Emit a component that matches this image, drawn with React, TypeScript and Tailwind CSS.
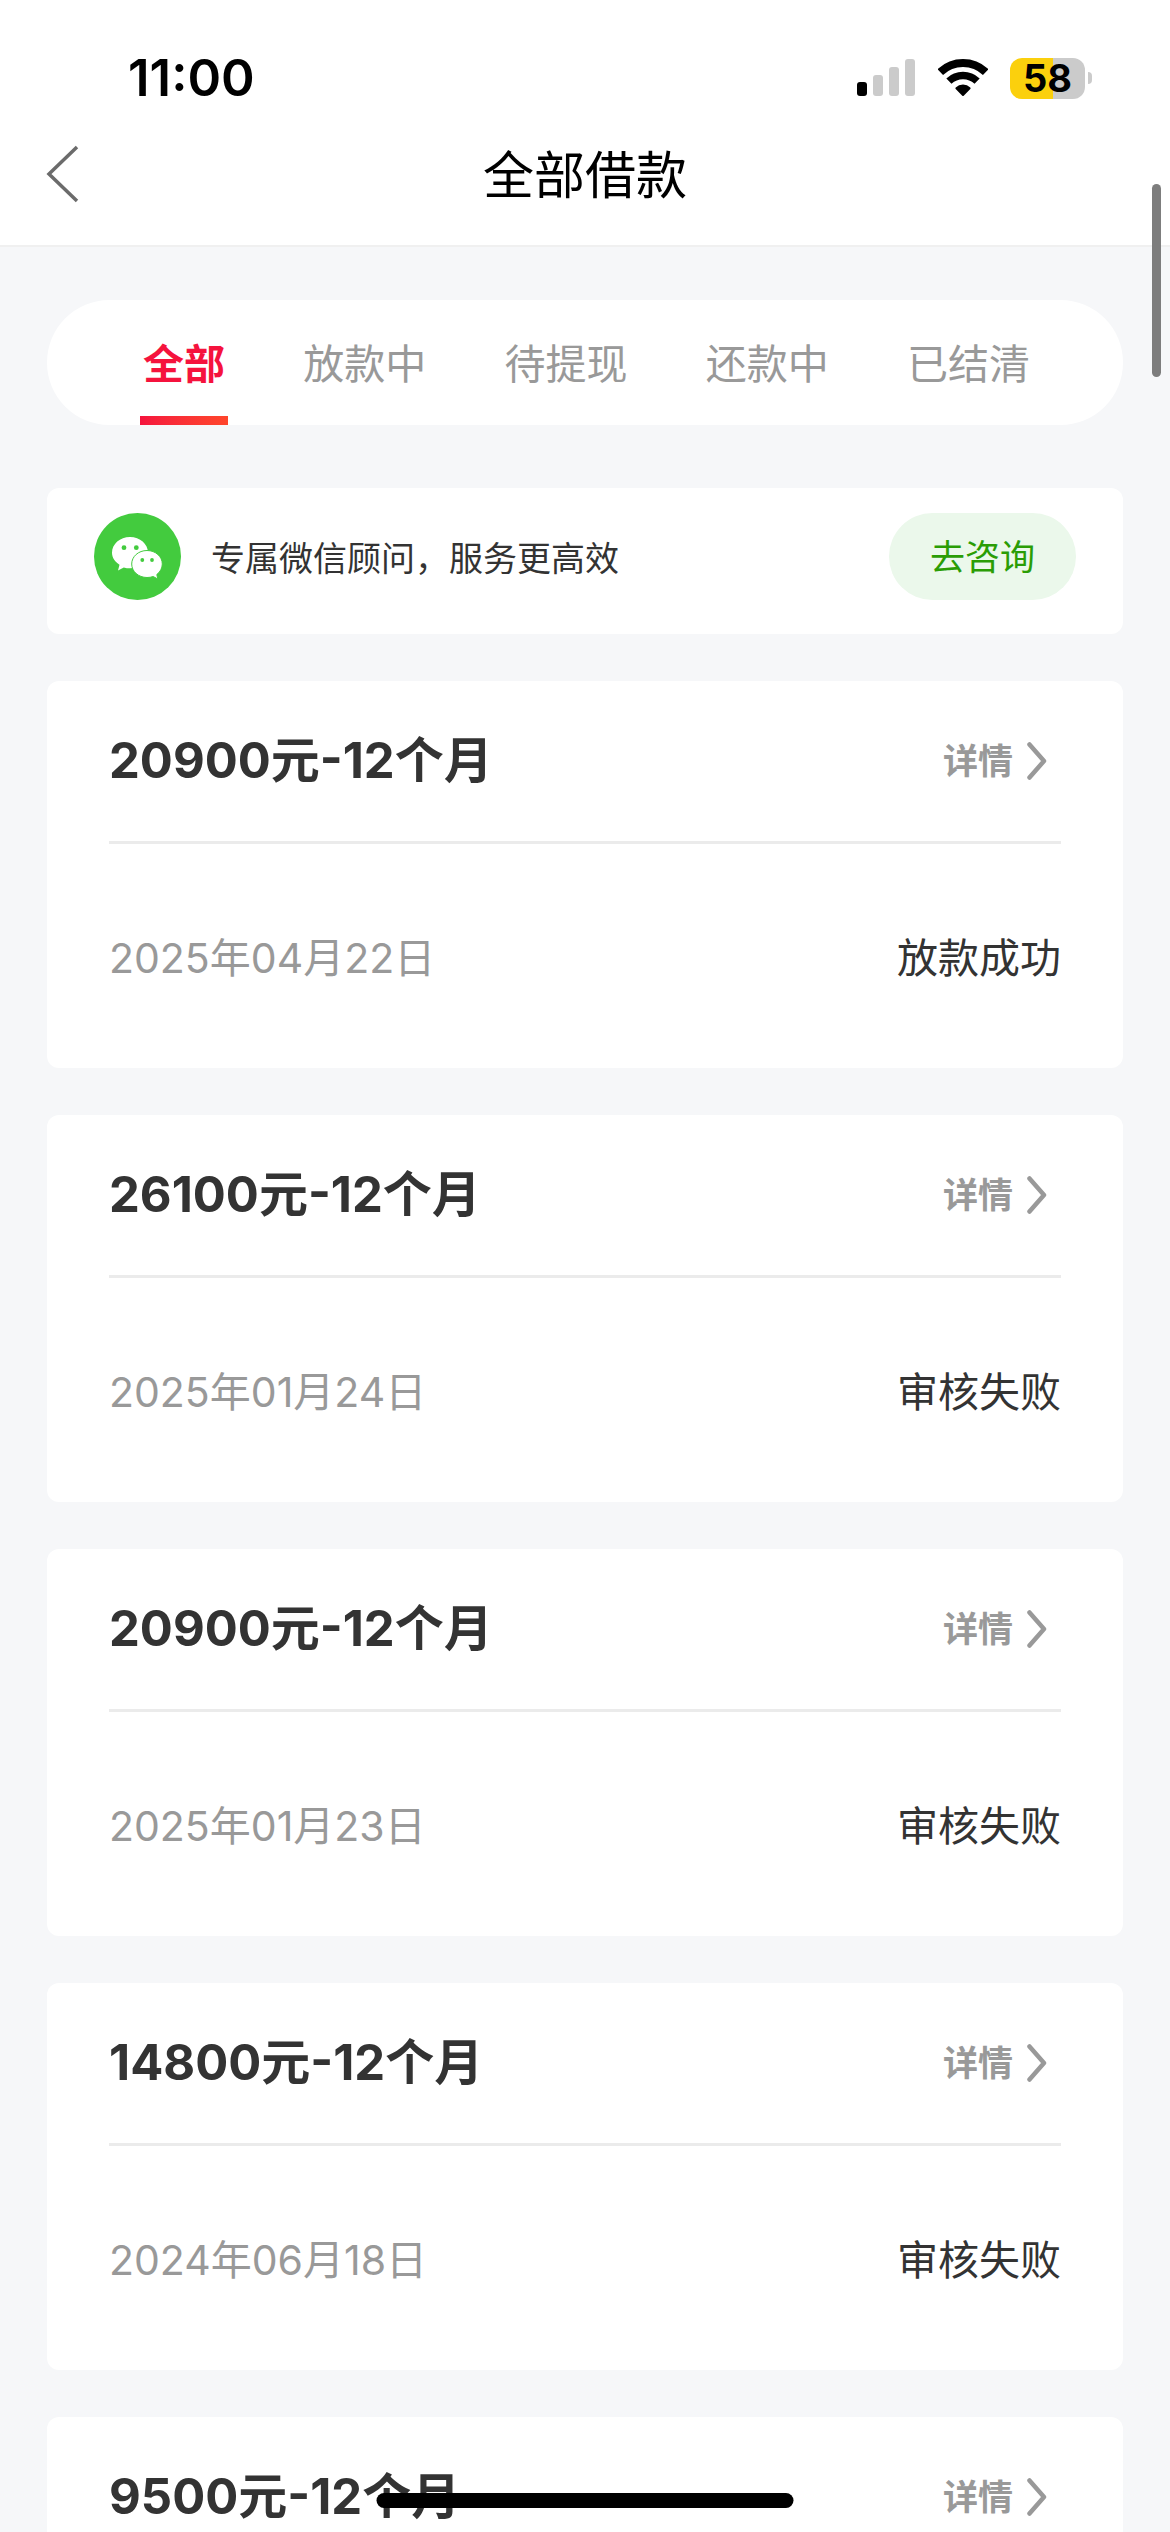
import { useState } from "react";

type Loan = { amount: string; term: string; date: string; status: string };

const TABS = ["全部", "放款中", "待提现", "还款中", "已结清"];

const LOANS: Loan[] = [
  { amount: "20900元", term: "12个月", date: "2025年04月22日", status: "放款成功" },
  { amount: "26100元", term: "12个月", date: "2025年01月24日", status: "审核失败" },
  { amount: "20900元", term: "12个月", date: "2025年01月23日", status: "审核失败" },
  { amount: "14800元", term: "12个月", date: "2024年06月18日", status: "审核失败" },
  { amount: "9500元", term: "12个月", date: "2024年06月18日", status: "审核失败" },
];

function SignalIcon() {
  return (
    <svg width="59" height="38" viewBox="0 0 59 38" aria-hidden="true">
      <rect x="0" y="23" width="10" height="14" rx="3" fill="#000" />
      <rect x="16" y="16" width="10" height="21" rx="3" fill="#cbcbcb" />
      <rect x="32" y="8" width="10" height="29" rx="3" fill="#cbcbcb" />
      <rect x="48" y="0" width="10" height="37" rx="3" fill="#cbcbcb" />
    </svg>
  );
}

function WifiIcon() {
  return (
    <svg width="50" height="38" viewBox="0 0 50 38" fill="none" aria-hidden="true">
      <path d="M2.3 13.1A33 33 0 0 1 47.7 13.1" stroke="#000" strokeWidth="8" />
      <path d="M10.9 22.1A20.5 20.5 0 0 1 39.1 22.1" stroke="#000" strokeWidth="7.5" />
      <path
        d="M25 36L18.4 29.2A9.5 9.5 0 0 1 31.6 29.2Z"
        fill="#000"
        stroke="#000"
        strokeWidth="2"
        strokeLinejoin="round"
      />
    </svg>
  );
}

function Battery() {
  return (
    <div className="flex items-center gap-[3px]">
      <div className="flex h-[41px] w-[75px] items-center justify-center rounded-xl bg-linear-to-r from-[#fbd00d] from-58% to-[#cbcbcb] to-58% text-[38px] leading-none font-bold">
        58
      </div>
      <div className="h-3 w-1 rounded-r-full bg-[#cbcbcb]" />
    </div>
  );
}

function WechatIcon() {
  return (
    <svg className="shrink-0" width="87" height="87" viewBox="0 0 87 87" aria-hidden="true">
      <circle cx="43.5" cy="43.5" r="43.5" fill="#43cb3e" />
      <path
        d="M36 24c10 0 18 7 18 15.7s-8 15.6-18 15.6c-2.200 0-4.300-.3-6.200-.9L24 57.500l1.500-5.800C21 48.800 18 44.500 18 39.700 18 31 26 24 36 24Z"
        fill="#fff"
      />
      <path
        d="M53 37.500c8.500 0 15.300 6 15.300 13.500 0 4.200-2.200 8-5.500 10.500l1 4.500-4.600-2.500c-1.900.7-4 1-6.200 1-8.500 0-15.300-6-15.300-13.500S44.500 37.500 53 37.500Z"
        fill="#fff"
        stroke="#43cb3e"
        strokeWidth="1"
      />
      <circle cx="30" cy="34.7" r="2.4" fill="#43cb3e" />
      <circle cx="42.3" cy="34.7" r="2.4" fill="#43cb3e" />
      <circle cx="48.3" cy="47" r="1.9" fill="#43cb3e" />
      <circle cx="58" cy="47" r="1.9" fill="#43cb3e" />
    </svg>
  );
}

function LoanCard({ loan }: { loan: Loan }) {
  return (
    <article className="rounded-xl bg-white px-[62px] leading-[60px]">
      <div className="flex items-center justify-between border-b-[3px] border-[#ebebeb] py-[50px]">
        <h2 className="text-[49px] font-bold text-[#333]">
          {loan.amount}-{loan.term}
        </h2>
        <a href="#detail" className="flex items-center gap-[14px] pr-[14px] text-[35px] font-bold text-[#999]">
          详情
          <svg width="20" height="38" viewBox="0 0 20 38" fill="none" aria-hidden="true">
            <path
              d="M2.5 2.5L17 19L2.5 35.5"
              stroke="#999"
              strokeWidth="4.5"
              strokeLinecap="round"
              strokeLinejoin="round"
            />
          </svg>
        </a>
      </div>
      <div className="flex items-center justify-between pt-[84px] pb-[80px]">
        <time className="text-[41px] text-[#999]">{loan.date}</time>
        <span className="text-[41px] text-[#333]">{loan.status}</span>
      </div>
    </article>
  );
}

export default function App() {
  const [active, setActive] = useState(0);

  return (
    <div className="relative flex h-screen flex-col overflow-hidden bg-[#f6f7f9] font-['Inter','Noto_Sans_CJK_SC',sans-serif] text-black">
      <header className="shrink-0 border-b-2 border-[#f0f0f0] bg-white">
        <div className="flex h-[103px] items-center justify-between pt-[53px] pr-[78px] pl-[128px]">
          <span className="text-[51px] leading-[50px] font-semibold">11:00</span>
          <div className="flex items-center gap-[22px]">
            <SignalIcon />
            <WifiIcon />
            <Battery />
          </div>
        </div>
        <nav className="grid h-[142px] grid-cols-[1fr_auto_1fr] items-center px-[46px]">
          <button type="button" aria-label="返回" className="justify-self-start">
            <svg width="34" height="58" viewBox="0 0 34 58" fill="none" aria-hidden="true">
              <path d="M31 2L3 29L31 56" stroke="#6b6b6b" strokeWidth="3.5" />
            </svg>
          </button>
          <h1 className="pt-1 text-[51px] leading-[60px]">全部借款</h1>
        </nav>
      </header>

      <main className="flex-1 overflow-y-auto px-[47px] pt-[53px] pb-[47px] [scrollbar-width:none]">
        <div role="tablist" className="flex h-[125px] justify-between rounded-full bg-white pr-[93px] pl-[96px]">
          {TABS.map((tab, i) => (
            <button
              key={tab}
              type="button"
              role="tab"
              aria-selected={i === active}
              onClick={() => setActive(i)}
              className={
                i === active
                  ? "relative flex items-center pt-1 text-[41px] font-bold text-[#f5133d]"
                  : "relative flex items-center pt-1 text-[41px] text-[#999]"
              }
            >
              {tab}
              {i === active && (
                <span className="absolute -inset-x-[3px] bottom-0 h-[9px] bg-linear-to-r from-[#f5133d] to-[#ff452b]" />
              )}
            </button>
          ))}
        </div>

        <section className="mt-[63px] flex items-center rounded-xl bg-white px-[47px] pt-[25px] pb-[34px]">
          <WechatIcon />
          <p className="ml-[30px] flex-1 pt-1 text-[34px] leading-[60px] text-[#333]">专属微信顾问，服务更高效</p>
          <button
            type="button"
            className="h-[87px] w-[187px] rounded-full bg-[#ebf8eb] text-[35px] leading-[60px] text-[#2a9d05]"
          >
            去咨询
          </button>
        </section>

        <div className="mt-[47px] flex flex-col gap-[47px]">
          {LOANS.map((loan, i) => (
            <LoanCard key={i} loan={loan} />
          ))}
        </div>
      </main>

      <div className="absolute top-[184px] right-[9px] h-[193px] w-[9px] rounded-full bg-[#7d7d7d]" />
      <div className="absolute bottom-6 left-1/2 h-[15px] w-[417px] -translate-x-1/2 rounded-full bg-black" />
    </div>
  );
}
